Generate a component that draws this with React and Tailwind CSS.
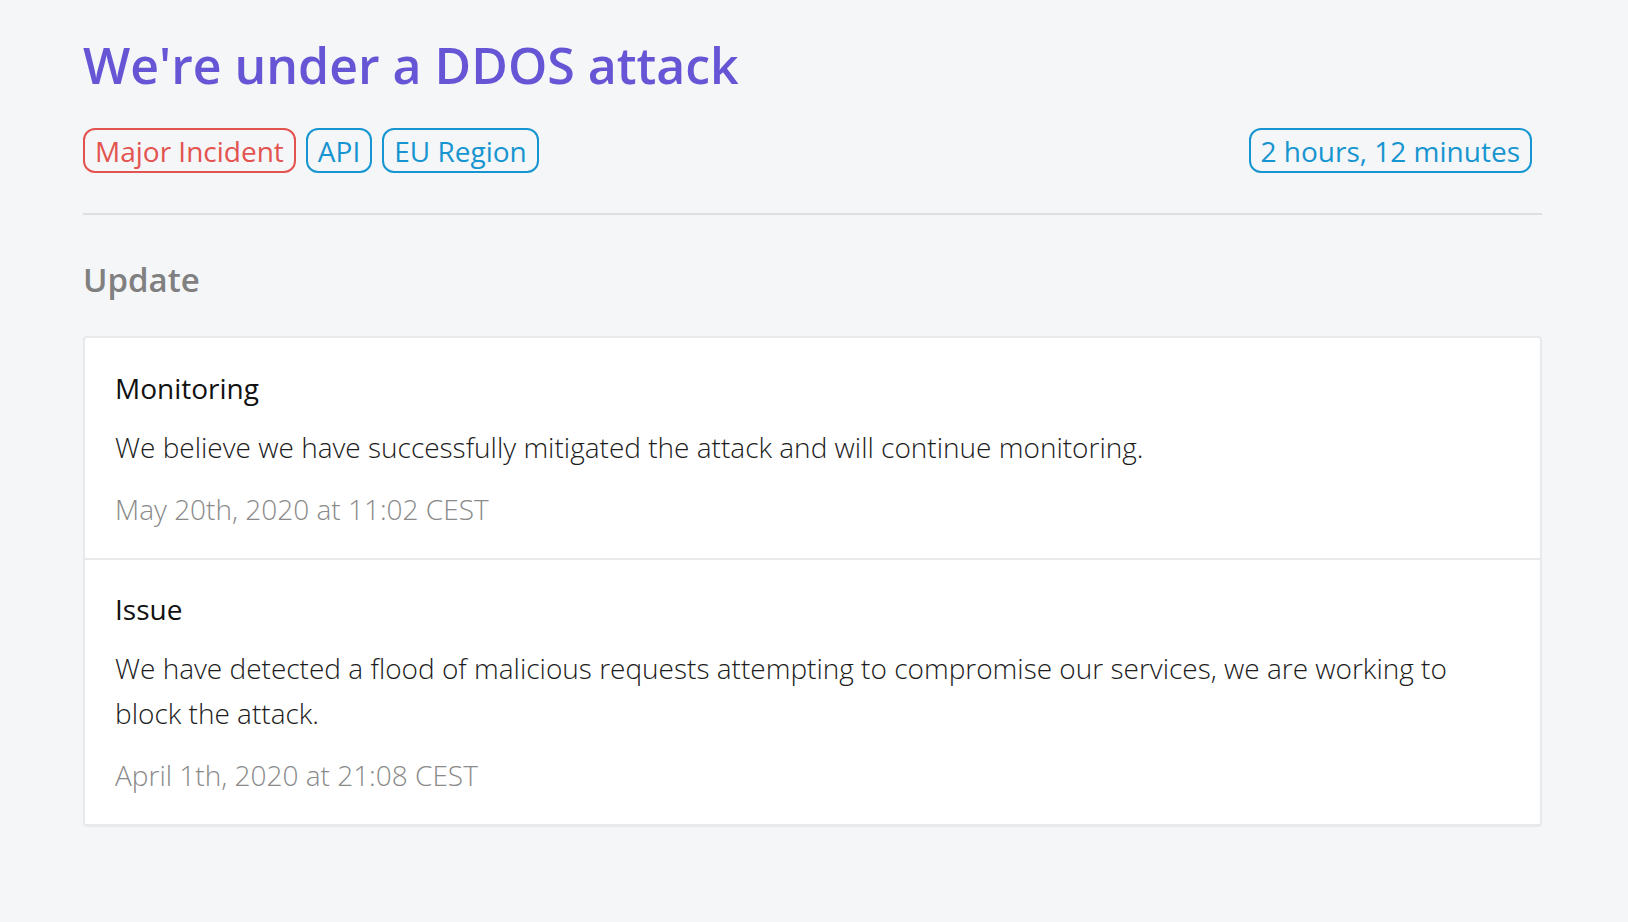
export default function App() {
  const tags = [
    { label: "Major Incident", tone: "red" },
    { label: "API", tone: "blue" },
    { label: "EU Region", tone: "blue" },
  ];

  const updates = [
    {
      status: "Monitoring",
      body: "We believe we have successfully mitigated the attack and will continue monitoring.",
      date: "May 20th, 2020 at 11:02 CEST",
    },
    {
      status: "Issue",
      body: "We have detected a flood of malicious requests attempting to compromise our services, we are working to block the attack.",
      date: "April 1th, 2020 at 21:08 CEST",
    },
  ];

  return (
    <div className="min-h-screen bg-[#f5f6f8] font-['Open_Sans',sans-serif]">
      <div className="pl-[83px] w-[1542px] pt-[35px] pb-[60px]">
        <h1 className="text-[50px] leading-[60px] font-semibold text-[#6655d5]">
          We're under a DDOS attack
        </h1>

        <div className="mt-[33px] flex items-center justify-between">
          <div className="flex items-center">
            {tags.map((t) => (
              <span
                key={t.label}
                className={
                  "mr-[10px] rounded-[12px] border-2 px-[10px] pt-[2px] text-[28px] leading-[39px] " +
                  (t.tone === "red"
                    ? "border-[#e35350] text-[#e35350]"
                    : "border-[#1795d0] text-[#1795d0]")
                }
              >
                {t.label}
              </span>
            ))}
          </div>
          <span className="mr-[10px] rounded-[12px] border-2 border-[#1795d0] px-[10px] pt-[2px] text-[28px] leading-[39px] text-[#1795d0]">
            2 hours, 12 minutes
          </span>
        </div>

        <div className="mt-[40px] h-[2px] bg-[#dedfe2]" />

        <h2 className="mt-[46px] text-[33px] leading-[38px] font-semibold text-[#808080]">
          Update
        </h2>

        <div className="mt-[37px] rounded-[4px] border-2 border-b-[3px] border-[#e8e9eb] bg-white">
          {updates.map((u, i) => (
            <div
              key={u.status}
              className={
                "px-[30px] pb-[26px] " +
                (i > 0 ? "pt-[27px] border-t-2 border-[#e8e9eb]" : "pt-[28px]")
              }
            >
              <div className="text-[28px] leading-[45px] text-[#111]">{u.status}</div>
              <p className="mt-[14px] text-[28px] leading-[45px] font-light text-[#1c1c1c]">
                {u.body}
              </p>
              <div className="mt-[17px] text-[28px] leading-[45px] font-light text-[#8a8a8a]">
                {u.date}
              </div>
            </div>
          ))}
        </div>
      </div>
    </div>
  );
}
